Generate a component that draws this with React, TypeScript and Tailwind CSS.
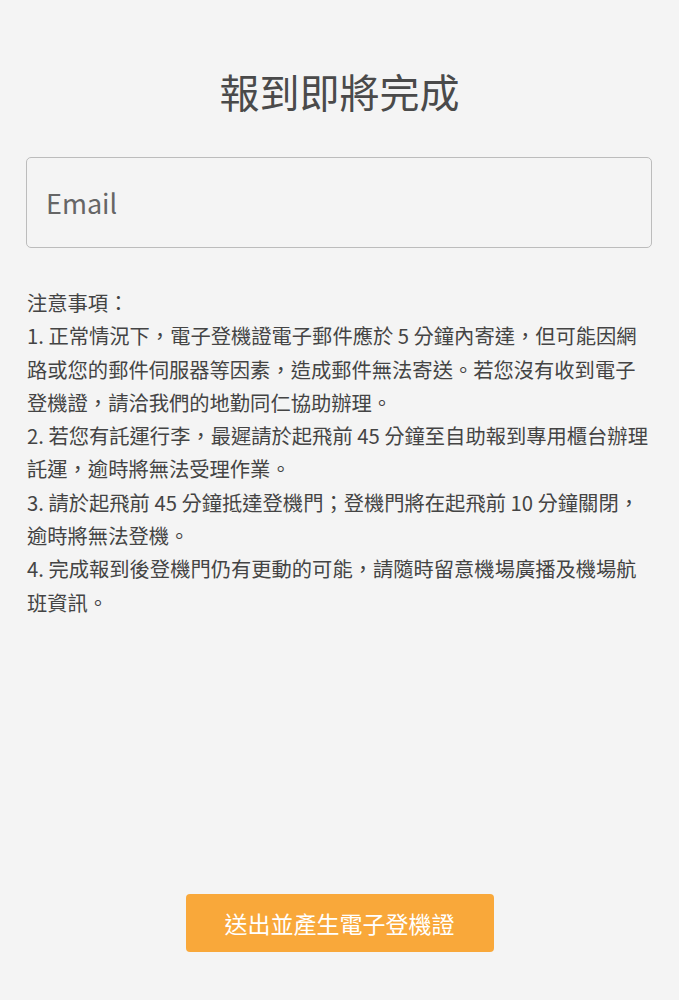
import React from "react";

export default function App() {
  const font = {
    fontFamily: '"Noto Sans CJK TC", "Noto Sans", sans-serif',
  };
  return (
    <div
      className="flex h-[1000px] w-full flex-col bg-[#f4f4f4]"
      style={font}
    >
      <h1 className="pt-[71px] text-center text-[40px] font-normal leading-[40px] text-[#4a4a4a]">
        報到即將完成
      </h1>
      <div className="mt-[46px] pl-[26px] pr-[27px]">
        <input
          type="email"
          placeholder="Email"
          className="box-border h-[91px] w-full rounded-[5px] border border-[#bcbcbc] bg-[#f4f4f4] pl-[19px] text-[27px] text-[#444] outline-none placeholder:text-[#666]"
        />
      </div>
      <div className="mt-[38px] pl-[27px] pr-[26px] text-[20.3px] leading-[33.3px] text-[#444]">
        <p>注意事項：</p>
        <p>
          1. 正常情況下，電子登機證電子郵件應於 5 分鐘內寄達，但可能因網路或您的郵件伺服器等因素，造成郵件無法寄送。若您沒有收到電子登機證，請洽我們的地勤同仁協助辦理。
        </p>
        <p>
          2. 若您有託運行李，最遲請於起飛前 45 分鐘至自助報到專用櫃台辦理託運，逾時將無法受理作業。
        </p>
        <p>
          3. 請於起飛前 45 分鐘抵達登機門；登機門將在起飛前 10 分鐘關閉，逾時將無法登機。
        </p>
        <p>
          4. 完成報到後登機門仍有更動的可能，請隨時留意機場廣播及機場航班資訊。
        </p>
      </div>
      <div className="flex-1" />
      <div className="flex justify-center pb-[48px]">
        <button className="h-[58px] w-[308px] rounded-[4px] bg-[#f9a83a] text-[23px] text-white">
          送出並產生電子登機證
        </button>
      </div>
    </div>
  );
}
